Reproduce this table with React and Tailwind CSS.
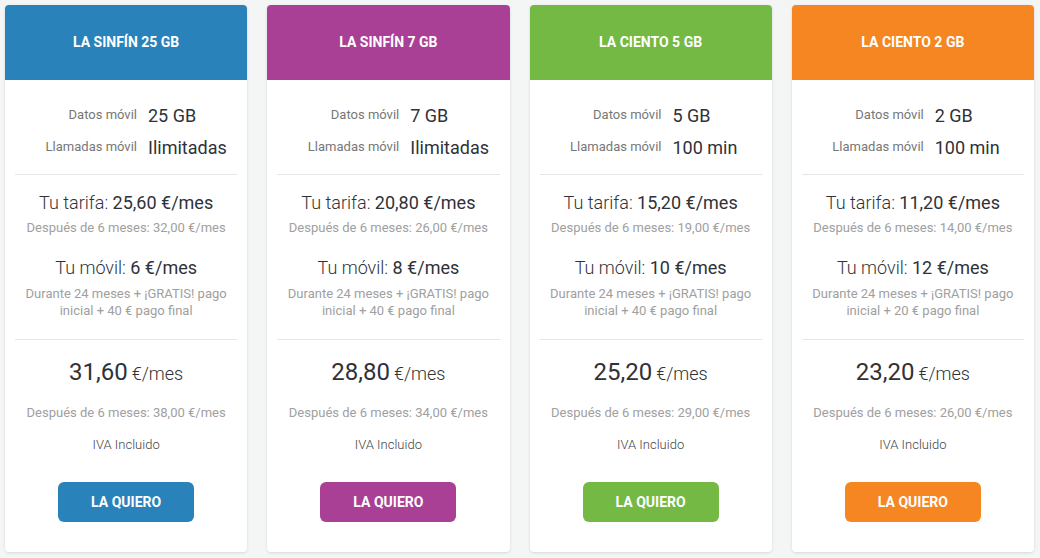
import React from "react";

const plans = [
  {
    name: "LA SINFÍN 25 GB",
    color: "bg-[#2a82bb]",
    datos: "25 GB",
    llamadas: "Ilimitadas",
    tarifa: "25,60",
    tarifaDespues: "32,00",
    movil: "6",
    pagoFinal: "40",
    total: "31,60",
    totalDespues: "38,00",
  },
  {
    name: "LA SINFÍN 7 GB",
    color: "bg-[#aa3f96]",
    datos: "7 GB",
    llamadas: "Ilimitadas",
    tarifa: "20,80",
    tarifaDespues: "26,00",
    movil: "8",
    pagoFinal: "40",
    total: "28,80",
    totalDespues: "34,00",
  },
  {
    name: "LA CIENTO 5 GB",
    color: "bg-[#73b944]",
    datos: "5 GB",
    llamadas: "100 min",
    tarifa: "15,20",
    tarifaDespues: "19,00",
    movil: "10",
    pagoFinal: "40",
    total: "25,20",
    totalDespues: "29,00",
  },
  {
    name: "LA CIENTO 2 GB",
    color: "bg-[#f68622]",
    datos: "2 GB",
    llamadas: "100 min",
    tarifa: "11,20",
    tarifaDespues: "14,00",
    movil: "12",
    pagoFinal: "20",
    total: "23,20",
    totalDespues: "26,00",
  },
];

const PlanCard = ({ plan }) => {
  return (
    <div className="flex-1 bg-white rounded-[4px] shadow-[0_1px_3px_rgba(0,0,0,0.12)] overflow-hidden">
      {/* Header */}
      <div
        className={`${plan.color} h-[75px] flex items-center justify-center text-white text-[14px] font-bold`}
      >
        {plan.name}
      </div>

      {/* Datos / llamadas */}
      <div className="pt-[19px]">
        <div className="flex items-center h-8">
          <span className="w-[132px] text-right text-[13px] text-[#777]">
            Datos móvil
          </span>
          <span className="ml-[11px] text-[18px] text-[#2f3238]">
            {plan.datos}
          </span>
        </div>
        <div className="flex items-center h-8">
          <span className="w-[132px] text-right text-[13px] text-[#777]">
            Llamadas móvil
          </span>
          <span className="ml-[11px] text-[18px] text-[#2f3238]">
            {plan.llamadas}
          </span>
        </div>
      </div>

      <div className="mx-[10px] mt-[11px] border-t border-[#e6e6e6]" />

      {/* Tarifa y móvil */}
      <div className="px-[10px] text-center">
        <div className="mt-[16px] text-[18px] leading-6 font-light text-[#2f3238]">
          Tu tarifa: <span className="font-normal">{plan.tarifa} €/mes</span>
        </div>
        <div className="mt-[4px] text-[13px] leading-[18px] text-[#a0a0a0]">
          Después de 6 meses: {plan.tarifaDespues} €/mes
        </div>
        <div className="mt-[19px] text-[18px] leading-6 font-light text-[#2f3238]">
          Tu móvil: <span className="font-normal">{plan.movil} €/mes</span>
        </div>
        <div className="mt-[5px] px-[10px] text-[13px] leading-[17px] text-[#a0a0a0]">
          Durante 24 meses + ¡GRATIS! pago inicial + {plan.pagoFinal} € pago
          final
        </div>
      </div>

      <div className="mx-[10px] mt-[20px] border-t border-[#e6e6e6]" />

      {/* Total */}
      <div className="text-center pb-[30px]">
        <div className="mt-[17px] leading-[30px] text-[#2f3238]">
          <span className="text-[24px] font-normal">{plan.total}</span>{" "}
          <span className="text-[18px] font-light">€/mes</span>
        </div>
        <div className="mt-[14px] text-[13px] leading-[18px] text-[#a0a0a0]">
          Después de 6 meses: {plan.totalDespues} €/mes
        </div>
        <div className="mt-[14px] text-[13px] leading-[18px] font-light text-[#444]">
          IVA Incluido
        </div>
        <button
          className={`${plan.color} mt-[28px] w-[136px] h-10 rounded-[6px] text-white text-[14px] font-bold`}
        >
          LA QUIERO
        </button>
      </div>
    </div>
  );
};

export default function App() {
  return (
    <div
      className="w-[1040px] h-[558px] bg-[#f4f5f5] flex items-start gap-5 pl-[5px] pr-[6px] pt-[5px]"
      style={{ fontFamily: "Roboto, 'Liberation Sans', sans-serif" }}
    >
      {plans.map((plan) => (
        <PlanCard key={plan.name} plan={plan} />
      ))}
    </div>
  );
}
